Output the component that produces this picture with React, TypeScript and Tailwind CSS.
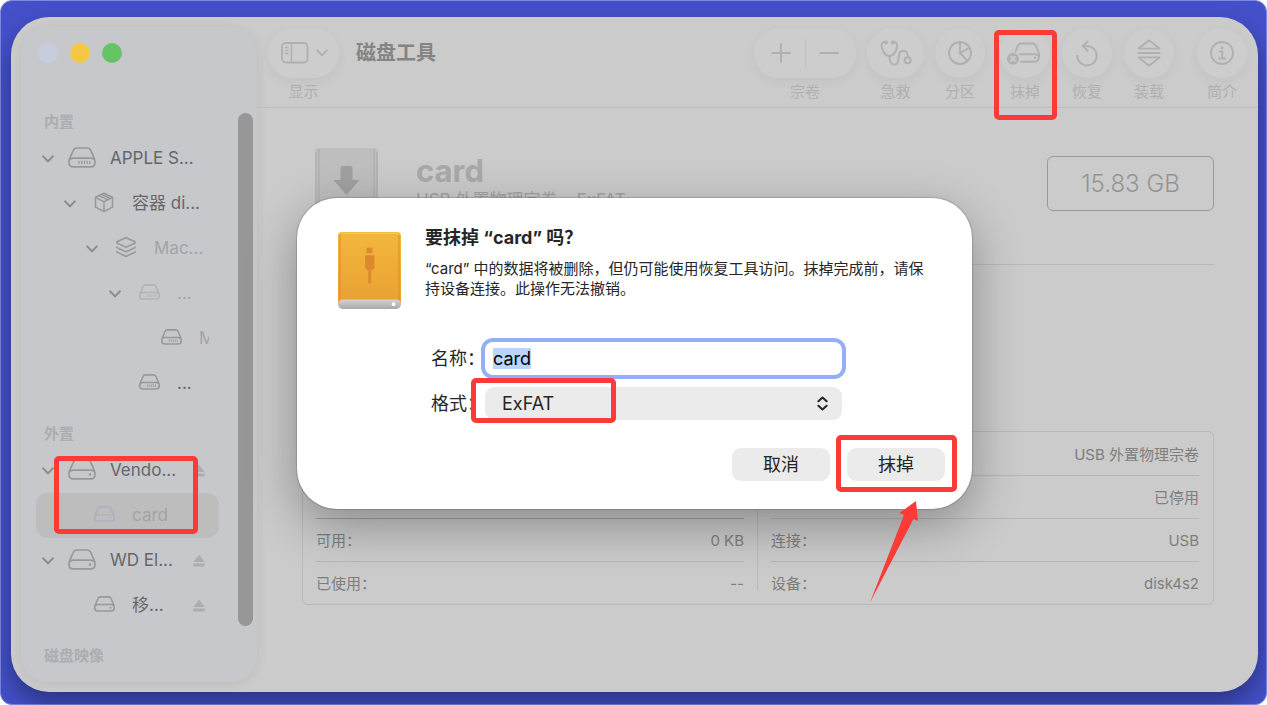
import { useEffect, useRef } from 'react'
import type { ReactNode } from 'react'
import { Layers } from 'lucide-react'
import clsx from 'clsx'

// ─── Icons ───────────────────────────────────────────────────────────────────

function Chevron() {
  return (
    <svg width="12" height="8" viewBox="0 0 12 8" fill="none" stroke="currentColor" strokeWidth="2" strokeLinecap="round" strokeLinejoin="round">
      <path d="M1.2 1.4 6 6.4l4.8-5" />
    </svg>
  )
}

type DriveKind = 'internal' | 'external' | 'volume'

function DriveIcon({ kind, small }: { kind: DriveKind; small?: boolean }) {
  return (
    <svg width={small ? 21 : 28} height={small ? 16 : 21} viewBox="0 0 28 21" fill="none" stroke="currentColor" strokeWidth={small ? 2.1 : 1.7}>
      <path d="M1 15.4c0-1.8.2-2.6.9-4.2L5.2 3.5C5.9 1.8 6.9 1 8.8 1h10.4c1.900 0 2.900.8 3.600 2.500l3.300 7.700c.7 1.600.9 2.400.9 4.200 0 3.100-1.300 4.400-4.200 4.400H5.200C2.300 19.800 1 18.500 1 15.400Z" />
      {kind === 'volume' ? (
        <path d="M2 11.500h24" strokeDasharray="2.500 1.500" />
      ) : (
        <path d="M2 12.600c.8-1 1.700-1.500 3.200-1.500h17.600c1.500 0 2.400.5 3.200 1.500" />
      )}
      {kind === 'internal' ? (
        <path d="M11 13.700v3.400M13.700 13.700v3.400M16.400 13.700v3.400M19.100 13.700v3.400M21.800 13.700v3.400" strokeWidth="1.200" />
      ) : (
        <circle cx="22" cy="15.500" r="1.300" fill="currentColor" stroke="none" />
      )}
    </svg>
  )
}

function BoxIcon() {
  return (
    <svg width="20" height="21" viewBox="0 0 20 21" fill="none" stroke="currentColor" strokeWidth="1.500" strokeLinejoin="round">
      <path d="M10 1.200 18.500 5.300v9.900L10 19.600 1.500 15.200V5.300Z" />
      <path d="M1.500 5.300 10 9.800l8.500-4.500M10 9.800v9.800M5 3.600l8.600 4.300M7.700 2.300l8.400 4.200" />
    </svg>
  )
}

function EjectIcon() {
  return (
    <svg width="12" height="12" viewBox="0 0 12 12" fill="currentColor">
      <path d="M6.400.3 11.700 7H.3L5.600.3q.4-.4.8 0Z" />
      <rect x="0.200" y="8.400" width="11.600" height="3" rx="0.800" />
    </svg>
  )
}

function SidebarIcon() {
  return (
    <svg width="28" height="22" viewBox="0 0 28 22" fill="none" stroke="currentColor" strokeWidth="1.800">
      <rect x="1" y="1" width="25.500" height="19.500" rx="4" />
      <path d="M10.500 1v19.500M4 5.500h3.500M4 8.500h3.500M4 11.500h3.500" strokeWidth="1.500" />
    </svg>
  )
}

function StethoscopeIcon() {
  return (
    <svg width="32" height="27" viewBox="0 0 32 27" fill="none" stroke="currentColor" strokeWidth="1.900" strokeLinecap="round">
      <path d="M5.800 2.300C3 1.800 1.500 2.800 1.600 5.300 1.800 10.500 5 16 9.400 16s7.600-5.500 7.800-10.700c.1-2.500-1.400-3.500-4.200-3" />
      <path d="M9.400 16c0 5 1.200 8.600 4.900 8.600 4 0 4.200-3.500 4.300-6.800.1-4.300 1.700-7.100 5-7.100 2.800 0 4.200 2.300 4.100 6.400" />
      <circle cx="27.700" cy="20.300" r="3" />
      <circle cx="6" cy="2.500" r="1" fill="currentColor" />
      <circle cx="12.800" cy="2.500" r="1" fill="currentColor" />
    </svg>
  )
}

function PartitionIcon() {
  return (
    <svg width="26" height="26" viewBox="0 0 26 26" fill="none" stroke="currentColor" strokeWidth="1.900">
      <circle cx="13" cy="13" r="11" />
      <path d="M13 2v11l9.500-5.500M13 13l7.500 7.800" />
    </svg>
  )
}

function EraseIcon() {
  return (
    <svg width="38" height="26" viewBox="0 0 38 26" fill="none" stroke="currentColor" strokeWidth="1.900" strokeLinecap="round">
      <path d="M9.600 11.500 11.800 6C12.500 4.200 13.400 3.500 15.200 3.500h11.400c1.800 0 2.700.7 3.400 2.500l2.400 6.200c.5 1.300.7 2 .7 3.500 0 4.300-1.300 6-4.800 6H15" />
      <path d="M14 14.200h14.500c1.600 0 2.600.4 3.600 1.400" />
      <circle cx="29" cy="17.700" r="1.300" fill="currentColor" stroke="none" />
      <circle cx="7" cy="18.800" r="6" fill="currentColor" stroke="none" />
      <path d="m4.900 16.700 4.200 4.200m0-4.200-4.200 4.200" stroke="#cbcbcb" />
    </svg>
  )
}

function RestoreIcon() {
  return (
    <svg width="24" height="28" viewBox="0 0 24 28" fill="none" stroke="currentColor" strokeWidth="1.900" strokeLinecap="round" strokeLinejoin="round">
      <path d="M2.300 16.800A9.700 9.700 0 1 0 12 7.100H8" />
      <path d="M12.800 2.400 7.800 7.100l4.800 4.700" />
    </svg>
  )
}

function MountIcon() {
  return (
    <svg width="24" height="28" viewBox="0 0 24 28" fill="none" stroke="currentColor" strokeWidth="1.900" strokeLinecap="round" strokeLinejoin="round">
      <path d="M12 1.200 22.500 9.600h-21ZM1.500 14h21M12 26.800 1.500 18.400h21Z" />
    </svg>
  )
}

function InfoIcon() {
  return (
    <svg width="26" height="26" viewBox="0 0 26 26" fill="none" stroke="currentColor" strokeWidth="1.800" strokeLinecap="round" strokeLinejoin="round">
      <circle cx="13" cy="13" r="11" />
      <path d="M10.800 11.300h2.500v7M10.300 18.500h6" />
      <circle cx="13" cy="7.800" r="1.500" fill="currentColor" stroke="none" />
    </svg>
  )
}

function UsbVolumeIcon() {
  return (
    <svg width="63" height="77" viewBox="0 0 64 78">
      <defs>
        <linearGradient id="usb-body" x1="0" y1="0" x2="0" y2="1">
          <stop offset="0" stopColor="#f3b73c" />
          <stop offset="1" stopColor="#e9a033" />
        </linearGradient>
        <linearGradient id="usb-base" x1="0" y1="0" x2="0" y2="1">
          <stop offset="0" stopColor="#d2d2d2" />
          <stop offset="1" stopColor="#a9a9a9" />
        </linearGradient>
      </defs>
      <rect x="0" y="0" width="64" height="74" rx="4" fill="url(#usb-body)" />
      <path d="M2 3v66M62 3v66" stroke="#d98f22" strokeWidth="1" />
      <rect x="3" y="0.500" width="58" height="1.500" fill="#f8c64a" />
      <rect x="0" y="68.500" width="64" height="9.500" rx="4.700" fill="url(#usb-base)" />
      <circle cx="56.500" cy="73.200" r="1.900" fill="#ffffff" />
      <g fill="#dc8a2e">
        <path d="M29 16h6v5.500h-6zM27.500 23.500h9.500v13l-2.500 2.500h-4.500l-2.500-2.500z" />
        <rect x="30.700" y="39" width="3" height="13" rx="1" />
      </g>
    </svg>
  )
}

function ImageVolumeIcon() {
  return (
    <svg width="64" height="78" viewBox="0 0 64 78">
      <rect x="0" y="0" width="63" height="78" rx="4" fill="#bebebe" />
      <path d="M1 4v74M4 1v77M59 1v77M62 4v74" stroke="#aaaaaa" />
      <path d="M27.500 18h8q2 0 2 2v12h7l-13 15-13-15h7V20q0-2 2-2Z" fill="#a0a0a0" />
    </svg>
  )
}

// ─── Highlight frame ─────────────────────────────────────────────────────────

function Highlight({ className }: { className: string }) {
  return <div className={clsx('pointer-events-none absolute rounded-[5px] border-5 border-[#fc3a38]', className)} />
}

// ─── Sidebar ─────────────────────────────────────────────────────────────────

const INDENT = ['pl-[6px]', 'pl-[28px]', 'pl-[50px]', 'pl-[73px]', 'pl-[95px]']

interface DeviceRowProps {
  depth: number
  label: string
  icon: ReactNode
  expanded?: boolean
  eject?: boolean
  faded?: boolean
  selected?: boolean
}

function DeviceRow({ depth, label, icon, expanded, eject, faded, selected }: DeviceRowProps) {
  return (
    <li className={clsx('flex h-[45px] items-center pr-[10px]', INDENT[depth], selected && 'rounded-xl bg-[#bdbdbd]')}>
      <span className="w-3 shrink-0 text-[#8b8b8f]">{expanded && <Chevron />}</span>
      <span
        className={clsx(
          'ml-[14px] flex w-7 shrink-0 justify-center pb-[3px]',
          selected ? 'text-[#aeaec2]' : faded && depth === 3 ? 'text-[#b3b3b7]' : 'text-[#98989c]',
        )}
      >
        {icon}
      </span>
      <span
        className={clsx(
          'ml-[14px] min-w-0 flex-1 overflow-hidden text-[17px] whitespace-nowrap',
          faded ? 'text-[#a3a3a7]' : 'text-[#666669]',
        )}
      >
        {label}
      </span>
      {eject && (
        <button type="button" aria-label="推出" className="mr-1 shrink-0 text-[#adadb0]">
          <EjectIcon />
        </button>
      )}
    </li>
  )
}

function GroupTitle({ children }: { children: ReactNode }) {
  return <h2 className="h-[29px] pl-2 text-[15px] leading-[30px] font-semibold text-[#acadb1]">{children}</h2>
}

function Sidebar() {
  return (
    <aside className="m-[10px] mr-0 flex w-[236px] shrink-0 flex-col rounded-[26px] bg-[#c7c8cc] pl-[15px] shadow-[0_2px_12px_rgba(0,0,40,0.07)]">
      <div className="flex gap-3 pt-4 pl-0.5">
        <button type="button" aria-label="关闭" className="size-5 rounded-full bg-[#c8cddd]" />
        <button type="button" aria-label="最小化" className="size-5 rounded-full bg-[#f4c842]" />
        <button type="button" aria-label="缩放" className="size-5 rounded-full bg-[#66c466]" />
      </div>

      <div className="mt-11 flex flex-1">
        <nav className="w-[183px]">
          <GroupTitle>内置</GroupTitle>
          <ul>
            <DeviceRow depth={0} label="APPLE S..." icon={<DriveIcon kind="internal" />} expanded />
            <DeviceRow depth={1} label="容器 di..." icon={<BoxIcon />} expanded />
            <DeviceRow depth={2} label="Mac..." icon={<Layers size={22} strokeWidth={1.7} />} expanded faded />
            <DeviceRow depth={3} label="..." icon={<DriveIcon kind="internal" small />} expanded faded />
            <DeviceRow depth={4} label="M" icon={<DriveIcon kind="internal" small />} faded />
            <DeviceRow depth={3} label="..." icon={<DriveIcon kind="internal" small />} />
          </ul>

          <div className="relative mt-[13px]">
            <GroupTitle>外置</GroupTitle>
            <ul>
              <DeviceRow depth={0} label="Vendo..." icon={<DriveIcon kind="external" />} expanded eject />
              <DeviceRow depth={1} label="card" icon={<DriveIcon kind="volume" small />} faded selected />
              <DeviceRow depth={0} label="WD El..." icon={<DriveIcon kind="external" />} expanded eject />
              <DeviceRow depth={1} label="移..." icon={<DriveIcon kind="external" small />} eject />
            </ul>
            <Highlight className="top-[37px] left-[18px] h-[78px] w-[144px]" />
          </div>

          <div className="mt-[13px]">
            <GroupTitle>磁盘映像</GroupTitle>
          </div>
        </nav>
        <div className="mt-[6px] mb-14 ml-[19px] w-[15px] rounded-full bg-[#979797]" />
      </div>
    </aside>
  )
}

// ─── Toolbar ─────────────────────────────────────────────────────────────────

const PILL = 'flex h-[50px] items-center justify-center rounded-full bg-[#cdcdcd] shadow-[0_4px_12px_rgba(0,0,0,0.04)]'

function Tool({ label, wide, children }: { label: string; wide?: boolean; children: ReactNode }) {
  return (
    <button type="button" className="flex flex-col items-center">
      <span className={clsx(PILL, wide ? 'w-[57px]' : 'w-[50px]')}>{children}</span>
      <span className="mt-1 text-[15px] leading-5">{label}</span>
    </button>
  )
}

function Toolbar() {
  return (
    <header className="flex items-start border-b border-[#bebebe] px-[11px] pt-[11px] pb-[5px] text-[#b0b0b0]">
      <button type="button" className="flex flex-col items-center">
        <span className={clsx(PILL, 'w-[71px] gap-[7px] pl-[1px]')}>
          <SidebarIcon />
          <Chevron />
        </span>
        <span className="mt-1 text-[15px] leading-5">显示</span>
      </button>
      <h1 className="ml-[17px] flex-1 text-[20px] leading-[50px] font-bold text-[#848484]">磁盘工具</h1>

      <div className="flex gap-[15px]">
        <div className="flex gap-[11px]">
          <div className="flex flex-col items-center">
            <div className={clsx(PILL, 'w-[102px] px-1')}>
              <button type="button" aria-label="添加宗卷" className="flex flex-1 justify-center">
                <svg width="20" height="20" viewBox="0 0 20 20" stroke="currentColor" strokeWidth="2" strokeLinecap="round">
                  <path d="M10 1v18M1 10h18" />
                </svg>
              </button>
              <span className="h-7 w-px bg-[#c0c0c0]" />
              <button type="button" aria-label="移除宗卷" className="flex flex-1 justify-center">
                <svg width="20" height="20" viewBox="0 0 20 20" stroke="currentColor" strokeWidth="2" strokeLinecap="round">
                  <path d="M1 10h18" />
                </svg>
              </button>
            </div>
            <span className="mt-1 text-[15px] leading-5">宗卷</span>
          </div>
          <Tool label="急救" wide><StethoscopeIcon /></Tool>
          <Tool label="分区"><PartitionIcon /></Tool>
        </div>
        <div className="flex gap-3">
          <div className="relative">
            <Tool label="抹掉"><EraseIcon /></Tool>
            <Highlight className="top-[2px] -left-[6px] h-[90px] w-[63px]" />
          </div>
          <Tool label="恢复"><RestoreIcon /></Tool>
          <Tool label="装载"><MountIcon /></Tool>
        </div>
        <div className="ml-[8px]">
          <Tool label="简介"><InfoIcon /></Tool>
        </div>
      </div>
    </header>
  )
}

// ─── Volume details ──────────────────────────────────────────────────────────

function InfoRow({ label, value }: { label?: string; value: string }) {
  return (
    <div className="flex h-[43px] items-center justify-between border-t border-[#b6b6b6] pt-[2px] first:border-transparent">
      <dt>{label}</dt>
      <dd>{value}</dd>
    </div>
  )
}

function Details() {
  return (
    <main className="flex flex-1 flex-col pt-10 pr-[44px] pb-[87px] pl-[45px]">
      <div className="flex h-[78px] pl-[13px]">
        <ImageVolumeIcon />
        <div className="ml-[37px] flex-1 pt-1.5">
          <h2 className="text-[31px] leading-[34px] font-bold text-[#a9a9a9]">card</h2>
          <p className="text-[17px] leading-6 text-[#a3a3a3]">USB 外置物理宗卷 • ExFAT</p>
        </div>
        <div className="mt-2 flex h-[55px] w-[167px] items-center justify-center rounded-md border border-[#9a9a9a] text-[24px] font-light text-[#949494]">
          15.83 GB
        </div>
      </div>
      <hr className="mt-[38px] border-[#b9b9b9]" />

      <section className="mt-auto flex rounded-md border border-[#b9b9b9] pr-[14px] pl-[13px] text-[15px] text-[#7e7e7e]">
        <dl className="flex flex-1 flex-col justify-end pr-[13px]">
          <div className="flex h-[43px] items-center justify-between border-t border-[#a2a2a2] pt-[2px]">
            <dt>可用：</dt>
            <dd>0 KB</dd>
          </div>
          <InfoRow label="已使用：" value="--" />
        </dl>
        <div className="my-[14px] w-px bg-[#b9b9b9]" />
        <dl className="flex-1 pl-[13px]">
          <InfoRow value="USB 外置物理宗卷" />
          <InfoRow value="已停用" />
          <InfoRow label="连接：" value="USB" />
          <InfoRow label="设备：" value="disk4s2" />
        </dl>
      </section>
    </main>
  )
}

// ─── Erase dialog ────────────────────────────────────────────────────────────

function EraseDialog() {
  const nameRef = useRef<HTMLInputElement>(null)

  useEffect(() => {
    nameRef.current?.focus()
    nameRef.current?.select()
  }, [])

  return (
    <div
      role="dialog"
      aria-modal="true"
      aria-labelledby="erase-title"
      className="w-[675px] rounded-[40px] bg-white px-[27px] pt-[29px] pb-7 text-[#262626] shadow-[0_0_1px_1px_rgba(0,0,0,0.15),0_16px_50px_rgba(0,0,0,0.32)]"
    >
      <div className="flex pl-[14px]">
        <div className="mt-[5px] shrink-0">
          <UsbVolumeIcon />
        </div>
        <div className="ml-6 w-[508px]">
          <h2 id="erase-title" className="text-[18px] leading-[22px] font-bold">要抹掉 “card” 吗？</h2>
          <p className="mt-[10px] text-[15px] leading-5">
            “card” 中的数据将被删除，但仍可能使用恢复工具访问。抹掉完成前，请保持设备连接。此操作无法撤销。
          </p>
        </div>
      </div>

      <div className="mt-[33px] flex flex-col gap-3 pl-[107px] text-[18px]">
        <div className="flex items-center">
          <label htmlFor="volume-name" className="w-[54px]">名称：</label>
          <input
            id="volume-name"
            ref={nameRef}
            defaultValue="card"
            className="h-[33px] w-[357px] rounded-lg bg-white px-2 text-black ring-4 ring-[#93aff7] outline-none selection:bg-[#b9d5fc] selection:text-black"
          />
        </div>
        <div className="flex items-center">
          <label htmlFor="volume-format" className="w-[54px]">格式：</label>
          <div className="relative">
            <select
              id="volume-format"
              className="h-[33px] w-[357px] appearance-none rounded-[9px] bg-[#ebebeb] px-[17px]"
            >
              <option>ExFAT</option>
            </select>
            <svg
              className="pointer-events-none absolute top-[9px] right-[14px]"
              width="11" height="15" viewBox="0 0 12 16" fill="none" stroke="currentColor" strokeWidth="2.200" strokeLinecap="round" strokeLinejoin="round"
            >
              <path d="M1.500 5.500 6 1.500l4.500 4M1.500 10.500l4.500 4 4.500-4" />
            </svg>
            <Highlight className="-top-[9px] -left-[14px] h-[45px] w-[145px]" />
          </div>
        </div>
      </div>

      <div className="mt-7 flex justify-end gap-[17px] text-[18px]">
        <button type="button" className="h-[33px] w-[98px] rounded-[9px] bg-[#ebebeb]">取消</button>
        <div className="relative">
          <button type="button" className="h-[33px] w-[98px] rounded-[9px] bg-[#ebebeb]">抹掉</button>
          <Highlight className="-top-[13px] -left-[11px] h-[57px] w-[121px]" />
          <svg className="pointer-events-none absolute top-[53px] left-[23px]" width="50" height="102" viewBox="0 0 50 102" fill="#fc3a38">
            <path d="M46 0 29.500 12l4.500 2L0 101.500 43.500 18l4.500 2Z" />
          </svg>
        </div>
      </div>
    </div>
  )
}

export default function App() {
  return (
    <div
      lang="zh-CN"
      className="flex h-screen rounded-xl border border-[#7d87dc] bg-[#4350c9] pt-4 pr-2 pb-3 pl-[10px] font-['Inter','Noto_Sans_CJK_SC',sans-serif]"
    >
      <div className="relative flex flex-1 rounded-[38px] bg-[#cbcbcb] shadow-[0_12px_24px_rgba(0,0,0,0.35)]">
        <Sidebar />
        <div className="flex min-w-0 flex-1 flex-col">
          <Toolbar />
          <Details />
        </div>
        <div className="absolute inset-0 flex items-center justify-center pb-0.5">
          <EraseDialog />
        </div>
      </div>
    </div>
  )
}
